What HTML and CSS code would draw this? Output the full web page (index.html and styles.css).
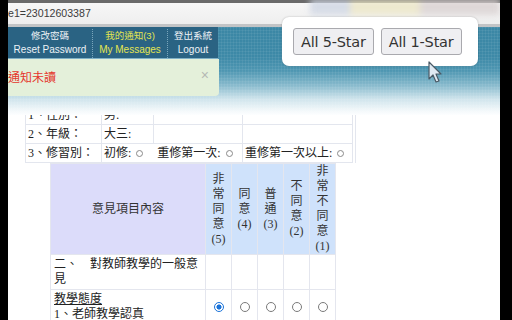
FILE: index.html
```html
<!DOCTYPE html>
<html lang="zh-Hant">
<head>
<meta charset="utf-8">
<title>教學意見調查</title>
<link rel="stylesheet" href="styles.css">
</head>
<body>
<div class="screen">
  <main class="content">
    <table class="info">
      <colgroup><col class="c1"><col class="c2"><col class="c3"><col class="c4"></colgroup>
      <tr><td>1、性別：</td><td>男:</td><td></td><td></td></tr>
      <tr><td>2、年級：</td><td>大三:</td><td></td><td></td></tr>
      <tr><td>3、修習別：</td><td colspan="2"><label class="choice">初修:<input type="radio" class="rad" name="t"></label><label class="choice">重修第一次:<input type="radio" class="rad" name="t"></label></td><td><label class="choice">重修第一次以上:<input type="radio" class="rad" name="t"></label></td></tr>
    </table>
    <table class="survey">
      <colgroup><col class="q"><col class="o"><col class="o"><col class="o"><col class="o"><col class="o"></colgroup>
      <tr class="head">
        <th class="qh">意見項目內容</th>
        <th>非<br>常<br>同<br>意<br>(5)</th>
        <th>同<br>意<br>(4)</th>
        <th>普<br>通<br>(3)</th>
        <th>不<br>同<br>意<br>(2)</th>
        <th>非<br>常<br>不<br>同<br>意<br>(1)</th>
      </tr>
      <tr>
        <td class="qt">二、　對教師教學的一般意見</td><td></td><td></td><td></td><td></td><td></td>
      </tr>
      <tr>
        <td class="qt"><u>教學態度</u><br>1、老師教學認真</td>
        <td class="opt"><input type="radio" class="dot" name="q1" checked></td>
        <td class="opt"><input type="radio" class="dot" name="q1"></td>
        <td class="opt"><input type="radio" class="dot" name="q1"></td>
        <td class="opt"><input type="radio" class="dot" name="q1"></td>
        <td class="opt"><input type="radio" class="dot" name="q1"></td>
      </tr>
    </table>
  </main>

  <header class="top">
    <div class="chrome">
      <div class="urlbar">
        <span class="url">e1=23012603387</span>
        <span class="blobs"><i class="b1"></i><i class="b2"></i><i class="b3"></i></span>
      </div>
    </div>
    <div class="banner">
      <nav class="nav">
        <a class="item"><span class="zh">修改密碼</span><span>Reset Password</span></a>
        <a class="item hot"><span class="zh">我的通知(3)</span><span>My Messages</span></a>
        <a class="item"><span class="zh">登出系統</span><span>Logout</span></a>
      </nav>
      <div class="alert"><span class="msg">通知未讀</span><span class="close">×</span></div>
    </div>
  </header>

  <div class="popup">
    <button class="btn">All 5-Star</button>
    <button class="btn">All 1-Star</button>
  </div>

  <svg class="cursor" width="16" height="24" viewBox="0 0 16 24">
    <path d="M1 1 L1 18 L5 14 L8 21 L11 20 L8 13 L13 13 Z" fill="#dfe9f2" stroke="#4a5a66" stroke-width="1.2" stroke-linejoin="round"/>
  </svg>
</div>
</body>
</html>
```

FILE: styles.css
```css
* { box-sizing: border-box; }
html, body { margin: 0; padding: 0; }
body { background: #000; width: 512px; height: 320px; overflow: hidden; }

.screen {
  position: relative;
  margin-left: 8px;
  width: 492px;
  height: 320px;
  background: #fff;
  overflow: hidden;
  font-family: "Liberation Serif", "Noto Sans CJK TC", serif;
  color: #222;
}

/* ---------- page content ---------- */
.content { padding-top: 105px; }

.info {
  margin-left: 17px;
  border-collapse: collapse;
  table-layout: fixed;
  font-size: 12px;
  border-right: 4px double #e3e6ee;
}
.info .c1 { width: 76px; }
.info .c2 { width: 52px; }
.info .c3 { width: 89px; }
.info .c4 { width: 111px; }
.info td {
  border: 1px solid #e3e6ee;
  height: 19px;
  padding: 0 2px;
  white-space: nowrap;
  line-height: 17px;
}
.choice { display: inline-flex; align-items: center; margin-right: 14px; }
.choice:last-child { margin-right: 0; }

.rad {
  appearance: none;
  -webkit-appearance: none;
  width: 7px;
  height: 7px;
  margin: 1px 0 0 5px;
  border: 1px solid #8a8a8a;
  border-radius: 50%;
  background: #fff;
}

.survey {
  margin-left: 42px;
  border-collapse: collapse;
  table-layout: fixed;
  font-size: 12px;
}
.survey .q { width: 155px; }
.survey .o { width: 26px; }
.survey th, .survey td { border: 1px solid #e4e6ee; }
.survey th {
  font-weight: normal;
  line-height: 15px;
  padding: 0;
  background: #cfe2fb;
  color: #333;
  height: 91px;
  vertical-align: middle;
}
.survey th.qh { background: #dcdcfa; }
.survey td { line-height: 15px; }
.survey .qt { padding: 2px 3px 2px 3px; }
.survey .opt { text-align: center; vertical-align: middle; padding-top: 4px; }

.dot {
  appearance: none;
  -webkit-appearance: none;
  width: 10px;
  height: 10px;
  margin: 0;
  border: 1px solid #7a7a7a;
  border-radius: 50%;
  background: #fff;
}
.dot:checked {
  border-color: #1a73d9;
  background: radial-gradient(circle, #1a73d9 0 2.3px, #fff 2.8px);
}

/* ---------- fixed header overlay ---------- */
.top {
  position: absolute;
  top: 0;
  left: 0;
  width: 492px;
  height: 115px;
}
.chrome {
  height: 27px;
  background: #6a6a6a;
  padding-top: 3px;
  border-bottom: 3px solid #c2c4c6;
}
.urlbar {
  height: 21px;
  background: linear-gradient(#f7f7f7, #eeeeee);
  display: flex;
  align-items: center;
}
.url {
  font-family: "Liberation Sans", sans-serif;
  font-size: 10.6px;
  color: #3c3c3c;
  padding-bottom: 2px;
}
.blobs { flex: 1; display: flex; height: 100%; justify-content: flex-end; filter: blur(3px); opacity: .8; }
.blobs i { display: block; height: 16px; margin-top: -4px; }
.b1 { width: 40px; background: #cfd6e4; }
.b2 { width: 70px; background: #ece6c6; }
.b3 { width: 80px; background: #d9d1d1; }

.banner {
  height: 88px;
  background:
    repeating-linear-gradient(90deg, rgba(255,255,255,.06) 0 1px, transparent 1px 3px),
    repeating-linear-gradient(0deg, rgba(255,255,255,.06) 0 1px, transparent 1px 3px),
    linear-gradient(#3b87a5 0, #3d89a7 30px, #4f97b2 44px, #86b9cc 58px, #cfe4ec 72px, #f4f9fb 84px, #fdfeff 88px);
}
.nav {
  display: grid;
  grid-template-columns: 84px 75px 51px;
  width: 210px;
  height: 32px;
  background: #2a6383;
  border-bottom: 1px solid #7fb0c6;
  padding-top: 2px;
  font-family: "Liberation Sans", "Noto Sans CJK TC", sans-serif;
  font-size: 10px;
  color: #edf2f6;
}
.item {
  display: flex;
  flex-direction: column;
  align-items: center;
  line-height: 14px;
  white-space: nowrap;
}
.item + .item { border-left: 1px dotted #7aa6bc; }
.item .zh { font-size: 9.5px; }
.hot { color: #e4e650; }

.alert {
  width: 211px;
  height: 37px;
  background: #e4f0da;
  border-bottom-right-radius: 4px;
  display: flex;
  align-items: center;
  justify-content: space-between;
  padding: 0 10px 2px 0;
  font-family: "Liberation Sans", "Noto Sans CJK TC", sans-serif;
}
.msg { color: #e5352c; font-size: 12px; }
.close { color: #b4b8b4; font-size: 14px; margin-top: -3px; }

/* ---------- popup ---------- */
.popup {
  position: absolute;
  left: 274px;
  top: 17px;
  width: 196px;
  height: 49px;
  background: #fff;
  border-radius: 7px;
  box-shadow: 0 0 2px rgba(0,0,0,.25);
  display: flex;
  gap: 7px;
  padding: 11px 0 0 11px;
}
.btn {
  height: 27px;
  padding: 0 7px;
  background: #efeff2;
  border: 1px solid #a9a9ae;
  border-radius: 3px;
  font-family: "DejaVu Sans", sans-serif;
  font-size: 14.5px;
  color: #333;
  letter-spacing: -0.2px;
}

.cursor {
  position: absolute;
  left: 420px;
  top: 61px;
  filter: blur(0.5px);
}
```
